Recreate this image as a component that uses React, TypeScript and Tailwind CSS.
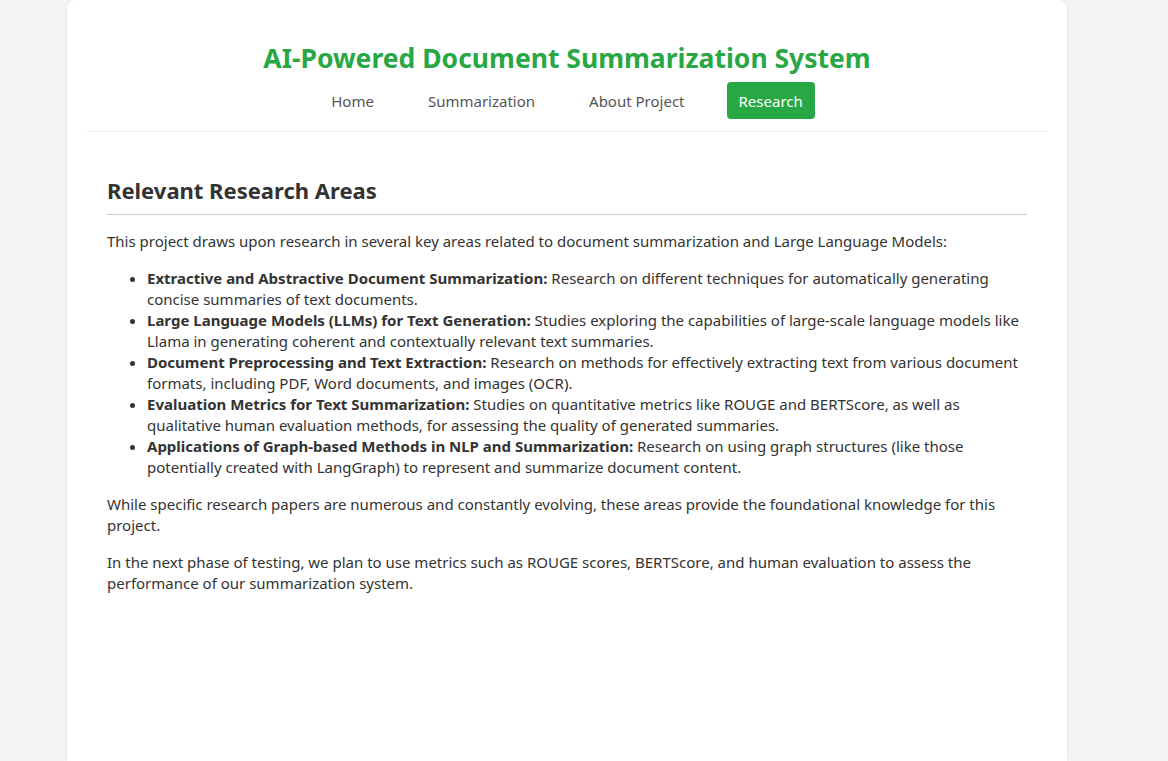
const links = ['Home', 'Summarization', 'About Project', 'Research']

const areas: { title: string; lines: string[] }[] = [
  {
    title: 'Extractive and Abstractive Document Summarization:',
    lines: ['Research on different techniques for automatically generating', 'concise summaries of text documents.'],
  },
  {
    title: 'Large Language Models (LLMs) for Text Generation:',
    lines: ['Studies exploring the capabilities of large-scale language models like', 'Llama in generating coherent and contextually relevant text summaries.'],
  },
  {
    title: 'Document Preprocessing and Text Extraction:',
    lines: ['Research on methods for effectively extracting text from various document', 'formats, including PDF, Word documents, and images (OCR).'],
  },
  {
    title: 'Evaluation Metrics for Text Summarization:',
    lines: ['Studies on quantitative metrics like ROUGE and BERTScore, as well as', 'qualitative human evaluation methods, for assessing the quality of generated summaries.'],
  },
  {
    title: 'Applications of Graph-based Methods in NLP and Summarization:',
    lines: ['Research on using graph structures (like those', 'potentially created with LangGraph) to represent and summarize document content.'],
  },
]

export default function App() {
  return (
    <div className="min-h-screen bg-[#f4f5f7] font-['Noto_Sans',sans-serif] text-[#333]">
      <div className="ml-[67px] w-[1000px] min-h-[761px] rounded-t-lg bg-white px-5 shadow-[0_0_4px_rgba(0,0,0,0.08)]">
        <header className="border-b border-[#eee] pb-3 pt-[37px] text-center">
          <h1 className="text-[26.5px] font-bold leading-[42px] text-[#28a745]">
            AI-Powered Document Summarization System
          </h1>
          <nav className="mt-[3px] flex justify-center">
            {links.map((l) => (
              <a
                key={l}
                href="#"
                className={
                  l === 'Research'
                    ? 'mx-[15px] rounded bg-[#28a745] px-3 pb-[7px] pt-[9px] text-[15px] leading-[21px] text-white'
                    : 'mx-[15px] rounded px-3 pb-[7px] pt-[9px] text-[15px] leading-[21px] text-[#555]'
                }
              >
                {l}
              </a>
            ))}
          </nav>
        </header>

        <section className="px-5 pt-[42px] text-[15px] leading-[21px]">
          <h2 className="border-b border-[#ccc] pb-2 text-[22px] font-bold leading-[32px]">Relevant Research Areas</h2>
          <p className="mt-4">
            This project draws upon research in several key areas related to document summarization and Large Language Models:
          </p>
          <ul className="my-4 list-disc pl-10">
            {areas.map((a) => (
              <li key={a.title}>
                <strong>{a.title}</strong> {a.lines[0]}
                <br />
                {a.lines[1]}
              </li>
            ))}
          </ul>
          <p>
            While specific research papers are numerous and constantly evolving, these areas provide the foundational knowledge for this
            <br />
            project.
          </p>
          <p className="mt-4">
            In the next phase of testing, we plan to use metrics such as ROUGE scores, BERTScore, and human evaluation to assess the
            <br />
            performance of our summarization system.
          </p>
        </section>
      </div>
    </div>
  )
}
